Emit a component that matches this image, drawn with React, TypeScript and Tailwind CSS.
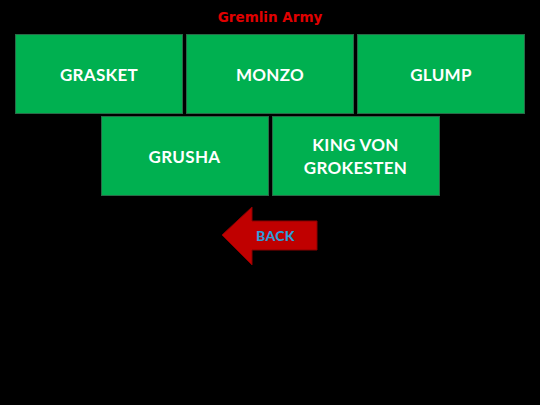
const row1 = ['GRASKET', 'MONZO', 'GLUMP']
const row2 = ['GRUSHA', 'KING VON GROKESTEN']

function Tile({ label }: { label: string }) {
  return (
    <button className="w-[168px] h-[80px] bg-[#00b050] border border-[#2a6a48] flex items-center justify-center px-6 text-white text-[17px] font-bold leading-[23px] tracking-[0.3px] text-center font-['Lato',sans-serif]">
      {label}
    </button>
  )
}

export default function App() {
  return (
    <div className="w-[540px] h-[405px] bg-black flex flex-col items-center overflow-hidden">
      <h1 className="pt-[9px] text-[13.5px] leading-[16px] font-bold text-[#e00000] font-['DejaVu_Sans',sans-serif]">
        Gremlin Army
      </h1>

      <div className="mt-[9px] flex gap-[3px]">
        {row1.map((n) => (
          <Tile key={n} label={n} />
        ))}
      </div>
      <div className="mt-[2px] flex gap-[3px]">
        {row2.map((n) => (
          <Tile key={n} label={n} />
        ))}
      </div>

      {/* back arrow */}
      <button className="mt-[10px] relative w-[98px] h-[61px]">
        <svg width="98" height="61" viewBox="0 0 98 61" className="absolute inset-0">
          <polygon
            points="1,29 31,1 31,15 96,15 96,44 31,44 31,59"
            fill="#c00000"
            stroke="#8a0000"
            strokeWidth="1"
          />
        </svg>
        <span className="absolute left-[35px] top-[21px] text-[14px] leading-[17px] font-black tracking-[0.3px] text-[#2e9bd6] font-['Lato',sans-serif]">
          BACK
        </span>
      </button>
    </div>
  )
}
